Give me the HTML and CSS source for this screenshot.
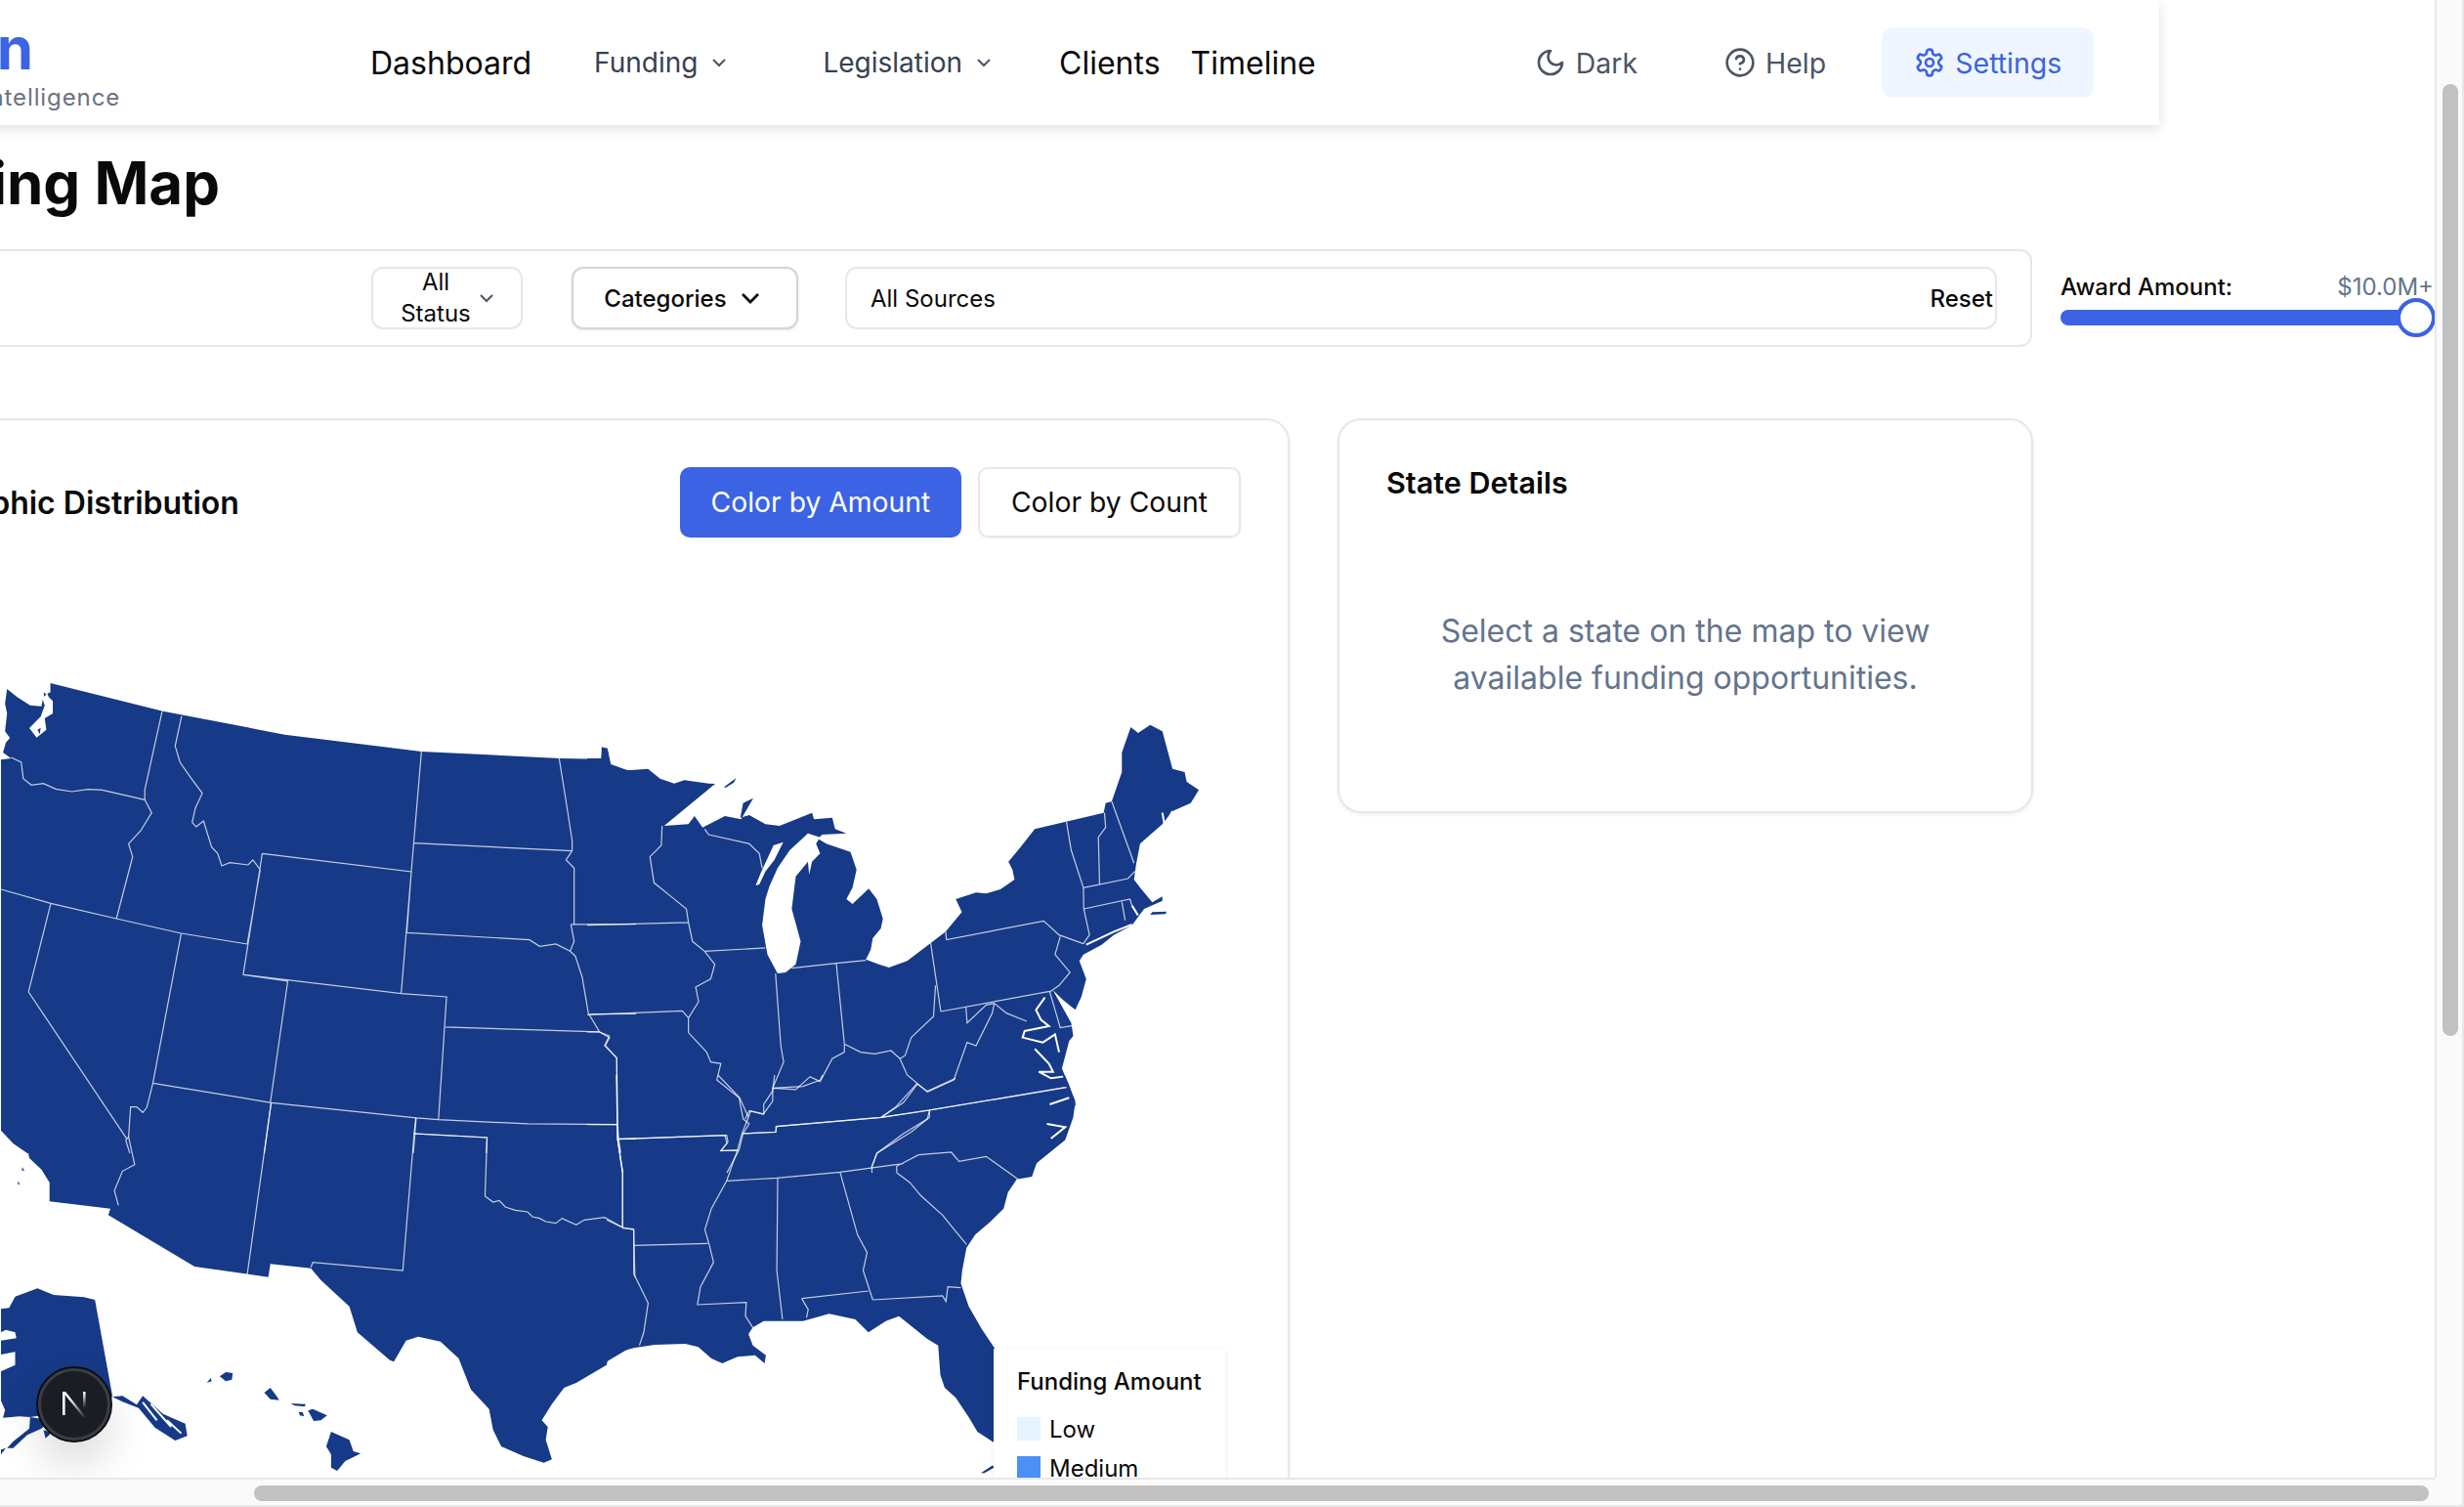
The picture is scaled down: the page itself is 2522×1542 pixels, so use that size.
FILE: index.html
```html
<!DOCTYPE html>
<html lang="en">
<head>
    <meta charset="UTF-8">
    <meta name="viewport" content="width=device-width, initial-scale=1.0">
    <title>Funding Map</title>
    <link rel="stylesheet" href="styles.css">
</head>
<body>
<div class="window">
    <div class="viewport">
        <div class="page">
            <header class="topbar">
                <div class="brand">
                    <div class="brand-name">Grain</div>
                    <div class="brand-sub">Funding Intelligence</div>
                </div>
                <a class="link link-main link-dashboard">Dashboard</a>
                <a class="link link-sub link-funding">Funding
                    <svg class="chev" viewBox="0 0 24 24"><path d="m6 9 6 6 6-6"/></svg>
                </a>
                <a class="link link-sub link-legislation">Legislation
                    <svg class="chev" viewBox="0 0 24 24"><path d="m6 9 6 6 6-6"/></svg>
                </a>
                <a class="link link-main link-clients">Clients</a>
                <a class="link link-main link-timeline">Timeline</a>
                <a class="link tool tool-dark">
                    <svg class="icon" viewBox="0 0 24 24"><path d="M12 3a6 6 0 0 0 9 9 9 9 0 1 1-9-9Z"/></svg>
                    Dark
                </a>
                <a class="link tool tool-help">
                    <svg class="icon" viewBox="0 0 24 24"><circle cx="12" cy="12" r="10"/><path d="M9.09 9a3 3 0 0 1 5.83 1c0 2-3 3-3 3"/><path d="M12 17h.01"/></svg>
                    Help
                </a>
                <a class="link tool tool-settings">
                    <svg class="icon" viewBox="0 0 24 24"><path d="M12.22 2h-.44a2 2 0 0 0-2 2v.18a2 2 0 0 1-1 1.73l-.43.25a2 2 0 0 1-2 0l-.15-.08a2 2 0 0 0-2.73.73l-.22.38a2 2 0 0 0 .73 2.73l.15.1a2 2 0 0 1 1 1.72v.51a2 2 0 0 1-1 1.74l-.15.09a2 2 0 0 0-.73 2.73l.22.38a2 2 0 0 0 2.73.73l.15-.08a2 2 0 0 1 2 0l.43.25a2 2 0 0 1 1 1.73V20a2 2 0 0 0 2 2h.44a2 2 0 0 0 2-2v-.18a2 2 0 0 1 1-1.73l.43-.25a2 2 0 0 1 2 0l.15.08a2 2 0 0 0 2.73-.73l.22-.39a2 2 0 0 0-.73-2.73l-.15-.08a2 2 0 0 1-1-1.74v-.5a2 2 0 0 1 1-1.74l.15-.09a2 2 0 0 0 .73-2.73l-.22-.38a2 2 0 0 0-2.73-.73l-.15.08a2 2 0 0 1-2 0l-.43-.25a2 2 0 0 1-1-1.73V4a2 2 0 0 0-2-2z"/><circle cx="12" cy="12" r="3"/></svg>
                    Settings
                </a>
            </header>

            <main class="content">
                <h1 class="page-title">Funding Map</h1>

                <div class="filter-row">
                    <div class="filters">
                        <div class="status-select">
                            <span class="status-text">All Status</span>
                            <svg class="chev" viewBox="0 0 24 24"><path d="m6 9 6 6 6-6"/></svg>
                        </div>
                        <button class="categories">Categories
                            <svg class="chev-dark" viewBox="0 0 24 24"><path d="m6 9 6 6 6-6"/></svg>
                        </button>
                        <div class="sources">
                            <span>All Sources</span>
                            <span class="reset">Reset</span>
                        </div>
                    </div>
                    <div class="award">
                        <div class="award-head">
                            <span class="award-label">Award Amount:</span>
                            <span class="award-value">$10.0M+</span>
                        </div>
                        <div class="track"><div class="thumb"></div></div>
                    </div>
                </div>

                <div class="columns">
                    <section class="card map-card">
                        <div class="map-head">
                            <h2 class="card-title map-title">Geographic Distribution</h2>
                            <div class="map-buttons">
                                <button class="toggle toggle-on">Color by Amount</button>
                                <button class="toggle">Color by Count</button>
                            </div>
                        </div>
                        <svg class="usmap" viewBox="-131 560 1400 960">
                            <!-- north west -->
                            <g transform="translate(0 680) scale(.4146 .3333)">
                                <path class="land" d="M0 292 25 288 5 270 12 240 22 225 10 205 15 150 10 120 15 75 40 100 72 125 100 128 105 95 122 85 122 57 400 143 700 215 1038 267 1380 288 1482 290 1483 253 1497 258 1507 315 1550 325 1568 330 1568 1500 65 1500 30 1470 0 1430Z"/>
                                <path class="lake" d="M96 85 110 78 118 100 128 112 128 150 108 165 112 200 88 224 70 195 98 160 108 125Z"/>
                                <path class="land" d="M106 85 112 92 106 98ZM90 200 98 194 96 214Z"/>
                            </g>
                            <!-- south west, alaska and hawaii -->
                            <g transform="translate(0 1100) scale(.4146 .3333)">
                                <path class="land" d="M0 170 20 195 65 225 70 255 100 290 120 330 120 388 270 410 265 430 478 588 660 620 665 580 765 593 790 630 860 710 880 790 960 875 970 880 1000 815 1030 803 1085 818 1130 870 1160 965 1205 1025 1215 1090 1235 1140 1290 1170 1340 1190 1360 1180 1345 1120 1350 1080 1335 1060 1360 1010 1390 960 1420 945 1495 890 1505 840 1520 830 1530 850 1568 835 1568 0 0 0Z"/>
                                <path class="land" d="M0 718 20 715 35 680 90 655 130 675 205 682 232 690 275 985 250 1030 120 1060 100 1045 72 1050 45 1048 5 1052 10 1028 0 1000Z"/>
                                <path class="lake" d="M0 790 12 782 35 790 38 808 0 815ZM0 858 35 850 35 890 0 910Z"/>
                                <path class="land" d="M72 1050 70 1085 30 1125 15 1145 30 1145 65 1105 100 1085 120 1060ZM105 1090 125 1098 110 1115ZM0 1150 12 1145 0 1165ZM275 988 300 985 335 1012 350 985 400 1040 455 1070 460 1108 430 1122 380 1082 340 1022 300 1003Z"/>
                                <path class="sound" d="M350 1005 385 1060M370 1010 420 1080M410 1060 445 1100"/>
                                <path class="land" d="M508 945 518 930 520 940ZM540 925 555 912 572 915 570 935 555 940ZM650 975 665 960 680 985 687 998 665 995ZM715 1008 752 1010 750 1018 725 1015ZM735 1035 745 1035 748 1048 738 1045ZM758 1030 770 1025 805 1045 790 1060 772 1062ZM815 1095 860 1120 870 1155 888 1162 850 1185 830 1215 815 1205 815 1165 803 1140ZM52 283 58 293 52 293ZM42 325 47 337 42 335Z"/>
                            </g>
                            <!-- north east -->
                            <g transform="translate(600 700) scale(.4146 .3333)">
                                <path class="land" d="M0 228 35 228 37 195 50 197 57 245 100 265 150 260 180 290 215 305 240 295 300 305 316 306 190 435 250 430 265 405 285 440 340 405 380 415 410 350 385 365 378 410 400 402 440 430 475 435 555 395 560 415 605 410 612 445 640 458 580 462 570 475 590 490 650 515 665 570 655 625 640 660 655 675 695 628 715 660 730 720 725 750 705 780 700 815 688 845 720 860 745 870 790 850 848 795 885 760 925 700 910 660 960 640 985 643 1020 630 1055 600 1050 570 1040 545 1070 500 1105 445 1275 395 1280 365 1295 360 1320 270 1320 210 1342 132 1360 150 1390 125 1420 145 1445 260 1475 270 1480 300 1510 325 1490 365 1445 390 1420 430 1365 490 1355 555 1350 600 1365 625 1395 670 1420 652 1420 665 1375 690 1345 740 1300 770 1270 800 1225 830 1215 850 1232 905 1220 960 1205 1000 1175 970 1150 940 1195 1040 1200 1080 1190 1095 1172 1180 1205 1280 1200 1330 1180 1400 1110 1470 1100 1500 0 1500Z"/>
                                <path class="land" d="M338 316 368 288 362 302 342 318ZM1395 700 1430 698 1428 706 1390 708Z"/>
                            </g>
                            <!-- south east -->
                            <g transform="translate(620 1100) scale(.4464 .3333)">
                                <path class="land" d="M0 0 1050 0 1060 30 1075 90 1060 140 1050 195 1010 240 985 270 975 312 940 320 920 360 910 410 880 450 845 490 825 530 815 600 812 640 830 710 860 780 890 840 890 1130 850 1095 830 1050 800 990 775 960 765 920 760 830 735 810 670 740 640 755 600 790 570 750 510 733 450 755 360 755 335 775 325 795 335 830 365 860 362 885 340 860 300 865 265 885 240 870 210 835 180 825 110 828 50 840 0 880Z"/>
                                <path class="land" d="M858 1222 885 1198 888 1205 866 1222Z"/>
                            </g>
                            <!-- water and state lines go over all the land -->
                            <g transform="translate(600 700) scale(.4146 .3333)">
                                <path class="lake" d="M545 458 575 470 565 490 575 520 555 545 548 585 545 545 515 590 505 690 527 790 515 860 490 885 470 888 445 830 432 740 440 660 450 620 470 565 500 510ZM460 495 484 485 462 540 440 575 425 615 416 618 430 575Z"/>
                                <path class="sound" d="M1130 962 1108 1000 1120 1030 1140 1050 1080 1065 1075 1085 1125 1100 1155 1075 1165 1130M1105 1120 1140 1165 1150 1190 1115 1190 1145 1210 1175 1205M1142 1290 1190 1270M1135 1350 1180 1360 1145 1395M1232 800 1300 760 1345 738M1420 395 1425 430M1445 390 1430 425M1345 680 1360 710"/>
                                <path class="line" d="M185 435 183 495 155 530 165 610 205 650 245 690 250 732M0 740 250 732 260 790 290 820 315 860 305 905 268 930 275 975 250 1025M0 1015 235 1003 250 1025M290 820 440 810M290 445 300 462 400 490 425 520 432 565M465 888 478 1110 485 1160 458 1240 458 1280 435 1320 400 1310 390 1335M250 1025 250 1070 295 1130 305 1160 330 1165 320 1215 375 1270 385 1335 400 1350 385 1380 375 1430 345 1500M75 1397 340 1385 345 1410 330 1432 375 1432M73 1148 75 1397 88 1500M0 1068 30 1068 55 1085 45 1110 73 1148M0 1352 73 1352M505 872 615 857 688 848M615 857 635 1105M458 1240 515 1245 550 1205 575 1220 605 1150 635 1130 635 1105M635 1105 675 1130 710 1135 750 1125 772 1150 785 1140 800 1085 855 1020 860 925M848 795 873 1005M885 760 887 785 1127 727 1165 770 1225 797M1168 775 1155 830 1192 885 1165 925 1142 945M873 1005 1142 943M1142 945 1168 1055 1200 1048M935 993 938 1040 985 985 1005 980 1035 1010 1085 1035M772 1150 790 1200 840 1252 905 1215 938 1100 960 1110 1000 1010 1005 980M815 1225 760 1300 725 1330M385 1380 465 1375 468 1358 725 1330 845 1308 1180 1238M845 1308 845 1330 800 1375 715 1440 703 1480 703 1500M1183 422 1195 510 1225 625 1226 690 1240 770 1225 797M1277 395 1280 440 1262 470 1265 615M1295 360 1350 550M1225 625 1335 597 1352 575M1226 690 1340 660 1345 680M1320 668 1328 725"/>
                            </g>
                            <g transform="translate(0 680) scale(.4146 .3333)">
                                <path class="line" d="M398 143 355 385 355 415M25 285 50 300 55 350 75 370 105 365 135 382 175 390 215 383 250 385 355 415M355 415 372 455 345 510 315 550 325 590 285 780M446 158 430 250 442 300 470 350 497 395 480 440 472 485 482 498 500 480 520 560 535 580 545 618 565 608 610 615 622 600 640 630M0 690 123 733 285 780 445 825 608 858M640 630 608 858M645 580 1013 636 988 1010 598 952 645 580M123 733 68 1005 310 1455M445 825 375 1285 360 1360 350 1375 335 1358 320 1358 315 1450 308 1460 318 1500M598 952 708 972 665 1345M375 1285 667 1345 1025 1392 1080 1397 1300 1410 1522 1412M1038 267 1013 636M1020 548 1410 572M1013 636 1002 823M1002 823 1305 845 1330 865 1370 858 1405 880 1418 895M988 1010 1100 1020 1095 1113 1478 1128M1095 1113 1080 1397M1378 288 1395 420 1410 540 1410 572 1395 600 1415 625 1415 798M1407 798 1568 797M1407 798 1415 850 1405 880 1418 895 1435 960 1450 1070 1478 1128 1502 1140 1490 1170 1520 1207 1522 1412 1525 1456 1530 1500M1455 1073 1568 1072M1522 1456 1568 1456M667 1345 650 1500M1025 1392 1018 1500M1018 1440 1200 1452 1198 1500"/>
                            </g>
                            <g transform="translate(0 1100) scale(.4146 .3333)">
                                <path class="line" d="M315 190 330 275 300 295 280 355 290 400M667 85 608 612M1024 130 1020 180 992 600 770 575 765 590M1020 180 1200 192 1195 372 1215 390 1230 385 1245 405 1270 415 1300 420 1312 435 1330 440 1345 450 1370 455 1385 440 1420 460 1440 445 1490 437 1535 468 1562 475 1565 620M1522 195 1535 300 1535 468M1522 150 1522 195"/>
                            </g>
                            <g transform="translate(620 1100) scale(.4464 .3333)">
                                <path class="line" d="M310 180 300 230 275 325 240 410 225 475 235 520 245 575 215 650 208 705 320 698 318 740 335 775M392 318 390 600 403 750M275 325 390 316 535 298 680 272M535 298 575 490 597 545 588 600 610 690M447 686 600 663M447 686 462 720 458 745M610 690 770 678 778 695 782 650 812 653M665 300 665 280 715 245 790 237 808 265 870 250 945 322M665 300 695 330 720 370 770 430 800 480 825 520M740 110 735 135 680 180 620 240 607 285M62 523 232 517M62 473 62 610 95 700 85 790 75 830M36 470 62 473M25 195 36 300 36 465M25 197 275 185 278 205 262 233 300 230M310 180 388 175 388 158 630 130 740 108 1055 38M630 130 680 85 712 28 735 50 800 10M22 0 25 197M0 445 36 468M255 0 305 70 325 130 310 180M385 0 380 50 360 90 360 120 330 110 325 130M380 40 450 35 490 15 495 0"/>
                            </g>
                        </svg>
                        <div class="legend">
                            <div class="legend-title">Funding Amount</div>
                            <div class="legend-item"><span class="swatch swatch-low"></span>Low</div>
                            <div class="legend-item"><span class="swatch swatch-medium"></span>Medium</div>
                            <div class="legend-item"><span class="swatch swatch-high"></span>High</div>
                        </div>
                    </section>

                    <section class="card details-card">
                        <h2 class="card-title details-title">State Details</h2>
                        <p class="details-empty">Select a state on the map to view available funding opportunities.</p>
                    </section>
                </div>
            </main>
        </div>
        <div class="dev-badge">
            <svg viewBox="0 0 28 28" class="dev-logo">
                <defs>
                    <linearGradient id="nfade" x1="0" y1="0" x2="1" y2="1"><stop offset=".3" stop-color="#fff"/><stop offset="1" stop-color="#fff" stop-opacity="0"/></linearGradient>
                    <linearGradient id="nstem" x1="0" y1="0" x2="0" y2="1"><stop offset="0" stop-color="#fff"/><stop offset=".7" stop-color="#fff" stop-opacity="0"/></linearGradient>
                </defs>
                <rect x="2" y="1" width="2.6" height="24" fill="#fff"/>
                <rect x="23" y="1" width="2.6" height="24" fill="url(#nstem)"/>
                <polygon points="2,1 5,1 26,27 23,27" fill="url(#nfade)"/>
            </svg>
        </div>
    </div>
    <div class="scroll-y"><div class="thumb-y"></div></div>
    <div class="scroll-x"><div class="thumb-x"></div></div>
    <div class="scroll-corner"></div>
</div>
</body>
</html>
```

FILE: styles.css
```css
* {
    box-sizing: border-box;
}
html, body {
    margin: 0;
    height: 100%;
    overflow: hidden;
}
body {
    font-family: Inter, "Liberation Sans", sans-serif;
    background-color: #fff;
    color: #0a0a0a;
}
.window {
    display: grid;
    grid-template-columns: 2492px 30px;
    grid-template-rows: 1512px 30px;
    height: 1542px;
}
.viewport {
    position: relative;
    overflow: hidden;
    background-color: #fff;
}
.page {
    width: 2790px;
    margin-left: -292px;
}

/* top bar */
.topbar {
    display: flex;
    align-items: center;
    width: 2502px;
    height: 128px;
    background-color: #fff;
    box-shadow: 0 4px 12px rgba(0, 0, 0, 0.12);
}
.brand {
    width: 378px;
    margin-left: 169px;
    margin-right: 124px;
    margin-top: 6px;
}
.brand-name {
    font-size: 60px;
    font-weight: 700;
    line-height: 66px;
    color: #3b63e3;
}
.brand-sub {
    font-size: 24px;
    line-height: 36px;
    letter-spacing: 0.9px;
    color: #6b7280;
}
.link {
    display: flex;
    align-items: center;
    white-space: nowrap;
}
.link-main {
    font-size: 32px;
    color: #0a0a0a;
}
.link-sub {
    font-size: 28px;
    color: #374151;
}
.link-funding {
    margin-left: 64px;
}
.link-legislation {
    margin-left: 94px;
}
.link-clients {
    margin-left: 65px;
}
.link-timeline {
    margin-left: 31px;
}
.chev {
    width: 24px;
    height: 24px;
    margin-left: 10px;
    fill: none;
    stroke: #4b5563;
    stroke-width: 2;
}
.tool {
    font-size: 28.5px;
    color: #4b5563;
}
.tool .icon {
    width: 32px;
    height: 32px;
    margin-right: 10px;
    fill: none;
    stroke: currentColor;
    stroke-width: 2;
    stroke-linecap: round;
    stroke-linejoin: round;
}
.tool-dark {
    margin-left: 224px;
}
.tool-help {
    margin-left: 89px;
}
.tool-settings {
    height: 72px;
    margin-left: 57px;
    padding: 0 33px;
    border-radius: 12px;
    background-color: #eff6ff;
    color: #3b63e3;
}

/* page content */
.content {
    padding-left: 112px;
}
.page-title {
    margin: 23px 0 32px 25px;
    font-size: 60px;
    line-height: 72px;
    font-weight: 700;
}
.filter-row {
    display: flex;
    gap: 29px;
}
.filters {
    display: flex;
    align-items: center;
    gap: 50px;
    width: 2260px;
    height: 100px;
    padding: 0 34px 0 558px;
    border: 2px solid #e5e7eb;
    border-radius: 12px;
    font-size: 24px;
}
.status-select {
    display: flex;
    align-items: center;
    width: 155px;
    height: 64px;
    padding: 0 14px 0 26px;
    border: 2px solid #e5e7eb;
    border-radius: 12px;
    flex: none;
}
.status-text {
    width: 76px;
    text-align: center;
    line-height: 32px;
}
.status-select .chev {
    margin-left: 2px;
}
.categories {
    display: flex;
    align-items: center;
    justify-content: center;
    gap: 8px;
    width: 232px;
    height: 64px;
    border: 2px solid #d1d5db;
    border-radius: 12px;
    background-color: #fff;
    box-shadow: 0 1px 3px rgba(0, 0, 0, 0.1);
    font: 500 24px Inter, sans-serif;
    color: #0a0a0a;
    flex: none;
}
.chev-dark {
    width: 32px;
    height: 32px;
    fill: none;
    stroke: #0a0a0a;
    stroke-width: 2;
}
.sources {
    flex: 1;
    display: flex;
    align-items: center;
    justify-content: space-between;
    height: 64px;
    margin-left: -2px;
    padding: 0 2px 0 24px;
    border: 2px solid #e5e7eb;
    border-radius: 12px;
}
.reset {
    font-weight: 500;
}
.award {
    width: 382px;
    flex: none;
    padding-top: 22px;
}
.award-head {
    display: flex;
    justify-content: space-between;
    font-size: 24px;
    line-height: 34px;
}
.award-label {
    font-weight: 500;
}
.award-value {
    color: #64748b;
}
.track {
    position: relative;
    height: 16px;
    margin-top: 6px;
    border-radius: 8px;
    background-color: #3b63e3;
}
.thumb {
    position: absolute;
    right: -2px;
    top: -12px;
    width: 40px;
    height: 40px;
    border: 4px solid #3b63e3;
    border-radius: 50%;
    background-color: #fff;
}

/* cards */
.columns {
    display: flex;
    gap: 49px;
    margin-top: 73px;
}
.card {
    border: 2px solid #e5e7eb;
    border-radius: 24px;
    background-color: #fff;
    box-shadow: 0 2px 4px rgba(0, 0, 0, 0.06);
}
.card-title {
    margin: 0;
    font-size: 32px;
    line-height: 44px;
    font-weight: 600;
}
.map-title {
    margin-left: 7px;
    margin-top: 2px;
}
.details-title {
    font-size: 30.5px;
    line-height: 34px;
}
.map-card {
    position: relative;
    width: 1500px;
    height: 1200px;
    padding: 48px 48px 0 48px;
    flex: none;
}
.map-head {
    display: flex;
    align-items: center;
    justify-content: space-between;
    height: 72px;
}
.map-buttons {
    display: flex;
    gap: 17px;
}
.toggle {
    height: 72px;
    padding: 0 32px;
    border: 2px solid #e5e7eb;
    border-radius: 10px;
    background-color: #fff;
    font: 400 28.3px Inter, sans-serif;
    color: #0a0a0a;
    box-shadow: 0 1px 2px rgba(0, 0, 0, 0.05);
}
.toggle-on {
    width: 288px;
    padding: 0;
    border-color: #3b63e3;
    background-color: #3b63e3;
    color: #fff;
}
.usmap {
    display: block;
    width: 1400px;
    height: 960px;
    margin-top: 10px;
}
.land {
    fill: #163a87;
}
.lake {
    fill: #fff;
}
.sound {
    fill: none;
    stroke: #fff;
    stroke-width: 2;
    vector-effect: non-scaling-stroke;
}
.line {
    fill: none;
    stroke: #fff;
    stroke-opacity: 0.75;
    stroke-width: 1.2;
    vector-effect: non-scaling-stroke;
}
.legend {
    position: absolute;
    left: 1195px;
    top: 950px;
    width: 237px;
    height: 240px;
    padding: 22px 24px;
    background-color: #fff;
    box-shadow: 0 1px 6px rgba(0, 0, 0, 0.08);
    font-size: 24px;
}
.legend-title {
    font-weight: 500;
    line-height: 24px;
    margin-bottom: 24px;
}
.legend-item {
    display: flex;
    align-items: center;
    gap: 9px;
    height: 24px;
    margin-bottom: 16px;
}
.swatch {
    width: 24px;
    height: 24px;
}
.swatch-low {
    background-color: #e8f4fd;
}
.swatch-medium {
    background-color: #4a90f5;
}
.swatch-high {
    background-color: #163a87;
}
.details-card {
    width: 712px;
    height: 404px;
    padding: 47px 48px;
    flex: none;
}
.details-empty {
    margin: 111px 0 0;
    padding: 0 40px;
    text-align: center;
    font-size: 32px;
    line-height: 48px;
    color: #64748b;
}

/* dev badge and browser scrollbars */
.dev-badge {
    position: absolute;
    left: 38px;
    top: 1399px;
    display: flex;
    align-items: center;
    justify-content: center;
    width: 76px;
    height: 76px;
    border: 4px solid #3a3d44;
    outline: 2px solid #0c0d10;
    outline-offset: -1px;
    border-radius: 50%;
    background-color: #1a1d24;
    box-shadow: 0 24px 44px rgba(0, 0, 0, 0.14);
}
.dev-logo {
    width: 28px;
    height: 28px;
}
.scroll-y {
    background-color: #fafafa;
    border-left: 2px solid #e8e8e8;
    border-right: 2px solid #e8e8e8;
    padding: 86px 4px 0 6px;
}
.thumb-y {
    height: 974px;
    border-radius: 8px;
    background-color: #c1c1c1;
}
.scroll-x {
    background-color: #fafafa;
    border-top: 2px solid #e8e8e8;
    border-bottom: 2px solid #e8e8e8;
    padding: 6px 6px 4px 260px;
}
.thumb-x {
    height: 16px;
    border-radius: 8px;
    background-color: #c1c1c1;
}
.scroll-corner {
    background-color: #fafafa;
    border-right: 2px solid #e8e8e8;
    border-bottom: 2px solid #e8e8e8;
}
```
